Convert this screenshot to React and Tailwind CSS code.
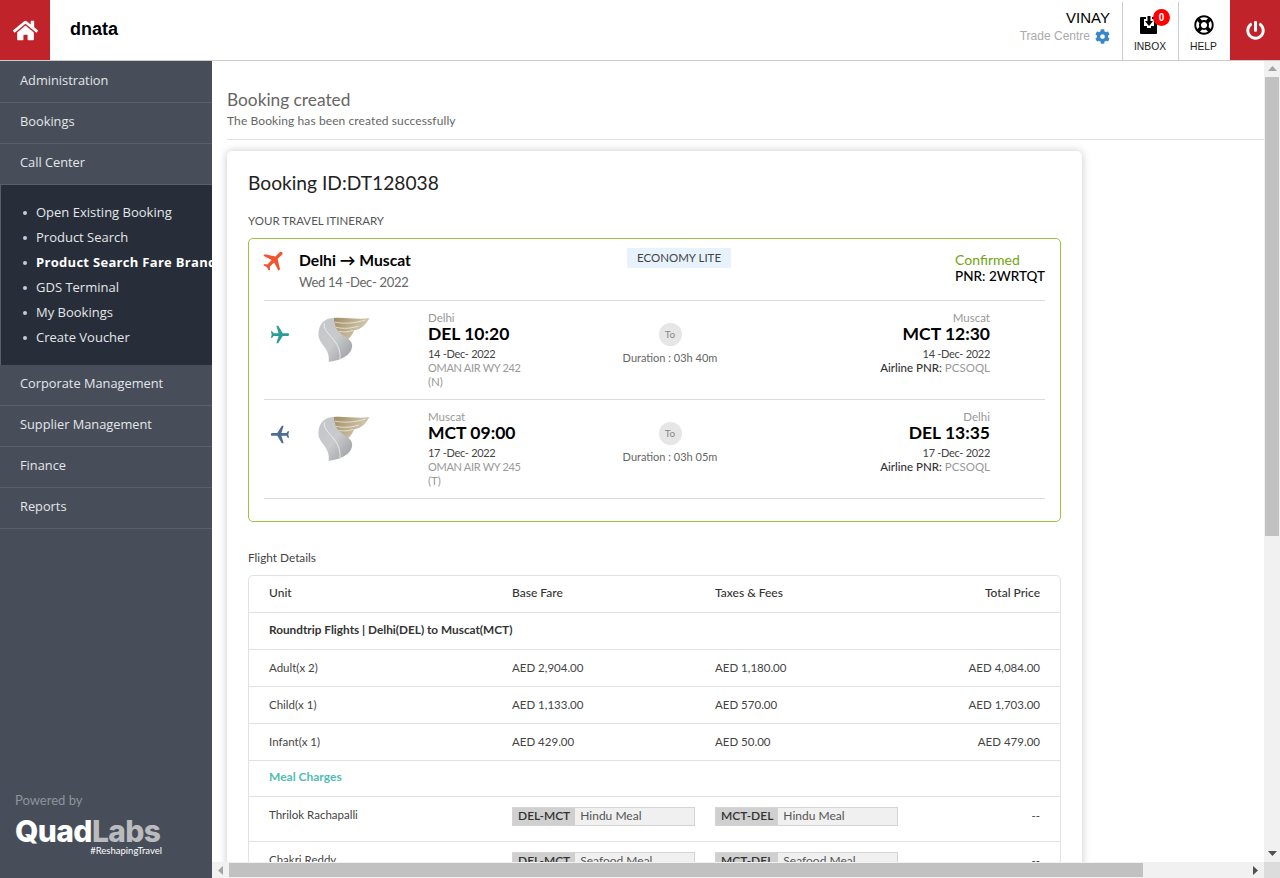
import { FaHome, FaCog, FaPowerOff, FaRegLifeRing } from "react-icons/fa"
import { MdFlight } from "react-icons/md"

const topMenu = ["Administration", "Bookings", "Call Center"]
const bottomMenu = ["Corporate Management", "Supplier Management", "Finance", "Reports"]
const subMenu = ["Open Existing Booking", "Product Search", "Product Search Fare Brand", "GDS Terminal", "My Bookings", "Create Voucher"]

const flights = [
  { from: "Delhi", fromCode: "DEL 10:20", to: "Muscat", toCode: "MCT 12:30", date: "14 -Dec- 2022", flight: "OMAN AIR WY 242", cls: "(N)", duration: "Duration : 03h 40m", iconClass: "text-[#2a9d94] rotate-90" },
  { from: "Muscat", fromCode: "MCT 09:00", to: "Delhi", toCode: "DEL 13:35", date: "17 -Dec- 2022", flight: "OMAN AIR WY 245", cls: "(T)", duration: "Duration : 03h 05m", iconClass: "text-[#4f6d94] -rotate-90" },
]

const fares = [
  ["Adult(x 2)", "AED 2,904.00", "AED 1,180.00", "AED 4,084.00"],
  ["Child(x 1)", "AED 1,133.00", "AED 570.00", "AED 1,703.00"],
  ["Infant(x 1)", "AED 429.00", "AED 50.00", "AED 479.00"],
]

const meals = [
  ["Thrilok Rachapalli", "Hindu Meal"],
  ["Chakri Reddy", "Seafood Meal"],
]

function MenuItem({ label }) {
  return (
    <div className="h-[41px] flex items-center pl-5 pb-[2px] border-b border-[#5a606b] text-[12.8px] text-[#e4e6e8] font-['Open_Sans']">
      {label}
    </div>
  )
}

function OmanLogo() {
  return (
    <svg width="52" height="46" viewBox="0 0 50 45">
      <defs>
        <linearGradient id="silver" x1="0" y1="0" x2="1" y2="1">
          <stop offset="0" stopColor="#c4c5c8" />
          <stop offset="0.5" stopColor="#c9cacc" />
          <stop offset="1" stopColor="#98999d" />
        </linearGradient>
        <linearGradient id="gold" x1="0" y1="0" x2="1" y2="0.4">
          <stop offset="0" stopColor="#a08c62" />
          <stop offset="1" stopColor="#d9cfb6" />
        </linearGradient>
      </defs>
      <path d="M15 1C25 0 40 3 50 1C46 8 42 12 35 13C33 18 31 20 29 22C22 18 17 14 16 10C15 6 15 3 15 1Z" fill="url(#gold)" />
      <path d="M16 5C26 7 36 6 46 3M17 10C25 12 32 11 39 9M20 14C25 15 29 15 34 13" stroke="#fff" strokeWidth="0.6" fill="none" />
      <path d="M15 1C6 1 0 7 0 17C0 27 12 30 10 44C20 43 33 38 33 28C33 20 20 18 17 10C16 6 15 3 15 1Z" fill="url(#silver)" />
      <path d="M6 6C3 16 23 22 21 41" stroke="#f4f4f4" strokeWidth="0.8" fill="none" />
    </svg>
  )
}

function InboxIcon() {
  return (
    <svg width="20" height="20" viewBox="0 0 20 20">
      <path d="M3 2h4v2H5v7h3v2h4v-2h3V4h-2V2h4a1 1 0 0 1 1 1v15a1 1 0 0 1-1 1H2a1 1 0 0 1-1-1V3a1 1 0 0 1 1-1z" fill="#000" />
      <path d="M8.5 1h3v5H14l-4 5-4-5h2.5z" fill="#000" />
    </svg>
  )
}

function FlightRow({ f }) {
  return (
    <div className="grid grid-cols-[164px_156px_1fr] h-[99px] border-t border-[#dcdcdc]">
      <div className="flex">
        <div className="w-[54px] pt-[23px] pl-[5px]">
          <MdFlight className={`text-[22px] ${f.iconClass}`} />
        </div>
        <div className="pt-[16px]">
          <OmanLogo />
        </div>
      </div>
      <div className="pt-[10px]">
        <div className="text-[11.5px] leading-[13px] text-[#999]">{f.from}</div>
        <div className="text-[17.5px] leading-[19px] font-bold text-black">{f.fromCode}</div>
        <div className="text-[11px] tracking-[-0.3px] leading-[14px] mt-[4px] text-[#444]">{f.date}</div>
        <div className="text-[11px] tracking-[-0.3px] leading-[14px] text-[#999]">{f.flight}</div>
        <div className="text-[11.5px] leading-[14px] text-[#999]">{f.cls}</div>
      </div>
      <div className="flex">
        <div className="w-[172px] flex flex-col items-center pt-[22px]">
          <div className="w-[23px] h-[23px] rounded-full bg-[#e6e6e6] flex items-center justify-center text-[10px] text-[#888]">To</div>
          <div className="text-[11px] leading-[14px] mt-[5px] text-[#666]">{f.duration}</div>
        </div>
        <div className="flex-1 pt-[10px] pr-[55px] text-right">
          <div className="text-[11.5px] leading-[13px] text-[#999]">{f.to}</div>
          <div className="text-[17.5px] leading-[19px] font-bold text-black">{f.toCode}</div>
          <div className="text-[11px] tracking-[-0.3px] leading-[14px] mt-[4px] text-[#444]">{f.date}</div>
          <div className="text-[11.5px] leading-[14px] text-[#999]">
            <span className="text-[#333] font-medium">Airline PNR: </span>PCSOQL
          </div>
        </div>
      </div>
    </div>
  )
}

function MealTag({ code, meal }) {
  return (
    <div className="w-[183px] h-[19px] flex border border-[#d4d4d4] bg-[#f0f0f0] text-[12px] leading-[16px]">
      <span className="bg-[#d0d0d0] px-[5px] font-semibold text-[#333]">{code}</span>
      <span className="px-[5px] text-[#555]">{meal}</span>
    </div>
  )
}

function Row({ children, className = "" }) {
  return (
    <div className={`grid grid-cols-[243px_203px_1fr_auto] px-5 border-b border-[#e2e2e2] ${className}`}>
      {children}
    </div>
  )
}

export default function App() {
  return (
    <div className="w-[1280px] h-[878px] flex flex-col overflow-hidden bg-white font-['Lato']">
      <header className="h-[61px] shrink-0 flex border-b border-[#ccc] bg-white">
        <div className="w-[50px] bg-[#c1232a] flex items-center justify-center">
          <FaHome className="text-white text-[25px]" />
        </div>
        <div className="flex-1 pl-5 pt-[17px] text-[18px] leading-[24px] font-bold text-black font-['Liberation_Sans']">dnata</div>
        <div className="flex font-['Liberation_Sans']">
          <div className="pr-3 text-right pt-[9px]">
            <div className="text-[15px] leading-[17px] text-black">VINAY</div>
            <div className="flex items-center justify-end gap-[5px] mt-[1px]">
              <span className="text-[12px] text-[#aaa]">Trade Centre</span>
              <FaCog className="text-[#3a87c8] text-[15px]" />
            </div>
          </div>
          <div className="w-[56px] mt-[2px] border-l border-[#ccc] relative flex flex-col items-center pt-[13px] pr-[4px]">
            <InboxIcon />
            <span className="absolute top-[7px] left-[30px] w-[17px] h-[17px] rounded-full bg-[#f00] text-white text-[10px] font-bold flex items-center justify-center">0</span>
            <span className="text-[10.3px] leading-[12px] mt-[6px] ml-[3px] text-[#222]">INBOX</span>
          </div>
          <div className="w-[52px] mt-[2px] border-l border-[#ccc] flex flex-col items-center pt-[13px] pr-[2px]">
            <FaRegLifeRing className="text-[20px] text-black" />
            <span className="text-[10.3px] leading-[12px] mt-[6px] text-[#222]">HELP</span>
          </div>
          <div className="w-[50px] bg-[#c1232a] flex items-center justify-center">
            <FaPowerOff className="text-white text-[19px]" />
          </div>
        </div>
      </header>

      <div className="flex-1 flex min-h-0">
        <aside className="w-[212px] shrink-0 pt-px bg-[#474e5a] flex flex-col overflow-hidden">
          {topMenu.map((m) => <MenuItem key={m} label={m} />)}
          <ul className="h-[180px] shrink-0 bg-[#272e39] border-l border-[#5a606b] pt-[15px] pl-[35px] whitespace-nowrap font-['Open_Sans'] text-[13px] text-[#e4e6e8]">
            {subMenu.map((s, i) => (
              <li key={s} className={`h-[25px] leading-[25px] relative ${i === 2 ? "font-bold text-white tracking-[0.3px]" : ""}`}>
                <span className="absolute left-[-13px] top-[11px] w-[4px] h-[4px] rounded-full bg-[#c8cbd0]"></span>
                {s}
              </li>
            ))}
          </ul>
          {bottomMenu.map((m) => <MenuItem key={m} label={m} />)}
          <div className="mt-auto pl-[15px] pb-[22px]">
            <div className="text-[13px] leading-[16px] text-[#8f939a] mb-[8px]">Powered by</div>
            <div className="w-[147px]">
              <div className="text-[30px] leading-[30px] font-extrabold tracking-[-0.6px] font-['Inter']">
                <span className="text-white">Quad</span><span className="text-[#b9bbbe]">Labs</span>
              </div>
              <div className="text-[9.5px] leading-[10px] text-right text-white">#ReshapingTravel</div>
            </div>
          </div>
        </aside>

        <div className="flex-1 flex flex-col min-w-0">
          <div className="flex-1 flex min-h-0">
            <main className="flex-1 overflow-hidden min-w-0">
              <div className="pt-[28px] ml-[15px] pb-[11px] border-b border-[#e2e2e2]">
                <h1 className="text-[17.3px] leading-[21px] text-[#666]">Booking created</h1>
                <p className="text-[12px] tracking-[0.1px] leading-[14px] mt-[4px] text-[#666]">The Booking has been created successfully</p>
              </div>
              <section className="mt-[11px] ml-[15px] w-[855px] rounded-[5px] bg-white shadow-[0_0_8px_rgba(0,0,0,0.22)] px-[21px] pt-[20px] pb-6">
                <h2 className="text-[19.2px] leading-[24px] text-[#222]">Booking ID:DT128038</h2>
                <div className="text-[11.5px] leading-[14px] mt-[19px] text-[#555]">YOUR TRAVEL ITINERARY</div>
                <div className="mt-[10px] h-[284px] border border-[#9bc53d] rounded-[5px] px-[15px]">
                  <div className="h-[61px] flex">
                    <MdFlight className="text-[#f1542e] text-[27px] rotate-45 mt-[8px] -ml-[3px] shrink-0" />
                    <div className="ml-[11px] w-[328px] pt-[12px]">
                      <div className="text-[15.7px] leading-[18px] font-bold text-black">Delhi → Muscat</div>
                      <div className="text-[13px] tracking-[-0.3px] leading-[16px] mt-[5px] text-[#666]">Wed 14 -Dec- 2022</div>
                    </div>
                    <div className="w-[104px] h-[20px] mt-[9px] bg-[#e8f2fc] text-[11.5px] leading-[20px] text-center text-[#444]">ECONOMY LITE</div>
                    <div className="ml-auto pt-[13px]">
                      <div className="text-[14px] leading-[16px] text-[#6fa50e]">Confirmed</div>
                      <div className="text-[13.5px] leading-[16px] text-black font-medium">PNR: 2WRTQT</div>
                    </div>
                  </div>
                  {flights.map((f) => <FlightRow key={f.fromCode} f={f} />)}
                  <div className="border-t border-[#dcdcdc]"></div>
                </div>

                <div className="text-[11.8px] leading-[14px] mt-[29px] text-[#444]">Flight Details</div>
                <div className="mt-[10px] border border-[#e2e2e2] rounded-[5px] text-[11.5px] text-[#444]">
                  <Row className="h-[37px] items-center pb-[2px] text-[12px] font-medium text-[#333]">
                    <div>Unit</div><div>Base Fare</div><div>Taxes &amp; Fees</div><div className="text-right">Total Price</div>
                  </Row>
                  <Row className="h-[37px] items-center pb-[2px] text-[11.8px] font-bold text-[#333]">
                    <div className="col-span-4">Roundtrip Flights | Delhi(DEL) to Muscat(MCT)</div>
                  </Row>
                  {fares.map((r) => (
                    <Row key={r[0]} className="h-[37px] items-center">
                      <div>{r[0]}</div><div>{r[1]}</div><div>{r[2]}</div><div className="text-right">{r[3]}</div>
                    </Row>
                  ))}
                  <Row className="h-[36px] items-center pb-[3px] text-[12px] font-bold text-[#52bdb4]">
                    <div className="col-span-4">Meal Charges</div>
                  </Row>
                  {meals.map(([name, meal]) => (
                    <Row key={name} className="h-[45px] pt-[10px]">
                      <div className="leading-[15px]">{name}</div>
                      <MealTag code="DEL-MCT" meal={meal} />
                      <MealTag code="MCT-DEL" meal={meal} />
                      <div className="text-right leading-[17px]">--</div>
                    </Row>
                  ))}
                </div>
              </section>
            </main>
            <div className="w-[16px] shrink-0 bg-[#f1f1f1] flex flex-col items-center">
              <svg className="mt-[5px]" width="9" height="5" viewBox="0 0 9 5"><path d="M0 5L4.5 0L9 5z" fill="#a3a3a3" /></svg>
              <div className="w-[14px] h-[459px] mt-[6px] bg-[#c1c1c1]"></div>
              <svg className="mt-auto mb-[6px]" width="9" height="5" viewBox="0 0 9 5"><path d="M0 0L4.5 5L9 0z" fill="#505050" /></svg>
            </div>
          </div>
          <div className="h-[16px] shrink-0 bg-[#f1f1f1] flex items-center">
            <svg className="ml-[6px]" width="5" height="9" viewBox="0 0 5 9"><path d="M5 0L0 4.5L5 9z" fill="#a3a3a3" /></svg>
            <div className="w-[914px] h-[14px] ml-[6px] bg-[#c1c1c1]"></div>
            <svg className="ml-auto mr-[6px]" width="5" height="9" viewBox="0 0 5 9"><path d="M0 0L5 4.5L0 9z" fill="#505050" /></svg>
            <div className="w-[16px] h-[16px] bg-[#dcdcdc]"></div>
          </div>
        </div>
      </div>
    </div>
  )
}
